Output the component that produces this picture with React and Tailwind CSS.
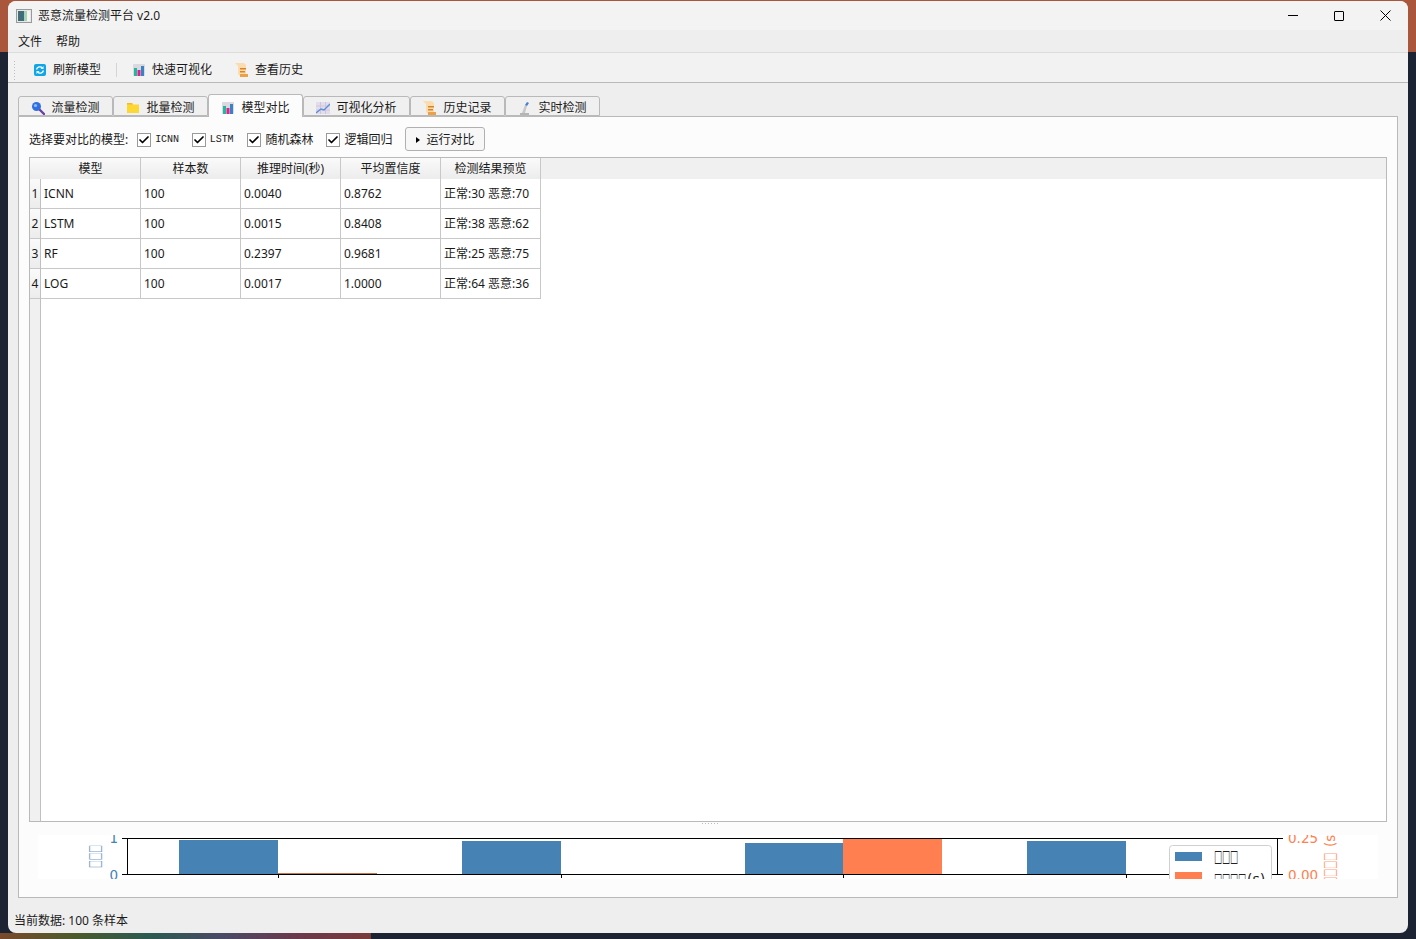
import { Check } from 'lucide-react'

const uiFont = "font-['Noto_Sans','Noto_Sans_CJK_SC',sans-serif]"

function RefreshIcon() {
  return (
    <svg width="14" height="14" viewBox="0 0 14 14" className="shrink-0">
      <rect x="1" y="1" width="12" height="12" rx="2" fill="#0ea5e9" />
      <path d="M3.5 6.5a3.5 3.5 0 0 1 6-1.5M10.5 7.5a3.5 3.5 0 0 1-6 1.5" fill="none" stroke="#fff" strokeWidth="1.3" />
      <path d="M10.5 3v3h-3zM3.5 11V8h3z" fill="#fff" />
    </svg>
  )
}

function ChartIcon() {
  return (
    <svg width="14" height="14" viewBox="0 0 14 14" className="shrink-0">
      <rect x="1" y="1" width="12" height="12" rx="1" fill="#dcd8e0" />
      <rect x="2" y="5" width="3" height="8" fill="#22b8a0" />
      <rect x="5.5" y="7" width="3" height="6" fill="#e0218a" />
      <rect x="9" y="3" width="3" height="10" fill="#3b82c4" />
    </svg>
  )
}

function ScrollIcon() {
  return (
    <svg width="14" height="14" viewBox="0 0 14 14" className="shrink-0">
      <path d="M0 0h9l2 2v11H5L3 11V3z" fill="#fcdcae" />
      <rect x="5" y="5" width="6" height="1.5" fill="#d98324" />
      <rect x="5" y="8" width="5" height="1.5" fill="#d98324" />
      <rect x="5" y="11" width="8" height="3" fill="#eda04a" />
    </svg>
  )
}

function SearchIcon() {
  return (
    <svg width="14" height="14" viewBox="0 0 14 14" className="shrink-0">
      <path d="M8 8l5 5" stroke="#6d3fa0" strokeWidth="2.4" strokeLinecap="round" />
      <circle cx="5.5" cy="5.5" r="4.5" fill="#2f6fe0" />
      <circle cx="4.5" cy="4.5" r="1.6" fill="#8fc0f5" />
    </svg>
  )
}

function FolderIcon() {
  return (
    <svg width="14" height="14" viewBox="0 0 14 14" className="shrink-0">
      <path d="M1 2h5l1 1.5h6V12H1z" fill="#fdd835" />
      <path d="M1 2h5l1 1.5H1z" fill="#f5b921" />
    </svg>
  )
}

function TrendIcon() {
  return (
    <svg width="14" height="14" viewBox="0 0 14 14" className="shrink-0">
      <rect x="0" y="1" width="14" height="12" fill="#e3dcec" />
      <path d="M0 5h14M0 9h14M4.5 1v12M9.5 1v12" stroke="#cfc6dc" strokeWidth="1" />
      <path d="M0 12l5-4 3 1 6-6" fill="none" stroke="#5b8fd8" strokeWidth="1.4" />
    </svg>
  )
}

function ProbeIcon() {
  return (
    <svg width="14" height="14" viewBox="0 0 14 14" className="shrink-0">
      <path d="M2 14h9v-2H2z" fill="#b5b5b5" />
      <path d="M4 12l3-8 2 1-2 7z" fill="#c8c8c8" />
      <path d="M7 4l2-3 2 1-2 3z" fill="#4a7fd0" />
    </svg>
  )
}

function ModelCheck({ label, mono, className = '' }) {
  return (
    <div className={`flex items-center gap-[4px] ${className}`}>
      <span className="flex h-[14px] w-[14px] items-center justify-center border border-[#9a9a9a] bg-white">
        <Check size={12} strokeWidth={3.5} className="text-black" />
      </span>
      <span className={mono ? "font-['Liberation_Mono',monospace] text-[10px] tracking-[-0.1px]" : ''}>{label}</span>
    </div>
  )
}

const tabs = [
  { label: '流量检测', icon: <SearchIcon />, w: 'w-[95px]' },
  { label: '批量检测', icon: <FolderIcon />, w: 'w-[95px]' },
  { label: '模型对比', icon: <ChartIcon />, w: 'w-[95px]', active: true },
  { label: '可视化分析', icon: <TrendIcon />, w: 'w-[107px]' },
  { label: '历史记录', icon: <ScrollIcon />, w: 'w-[95px]' },
  { label: '实时检测', icon: <ProbeIcon />, w: 'w-[95px]' },
]

const columns = [
  { label: '模型', w: 'w-[111px] pl-[11px]' },
  { label: '样本数', w: 'w-[100px]' },
  { label: '推理时间(秒)', w: 'w-[100px]' },
  { label: '平均置信度', w: 'w-[100px]' },
  { label: '检测结果预览', w: 'w-[100px]' },
]

const rows = [
  ['ICNN', '100', '0.0040', '0.8762', '正常:30 恶意:70'],
  ['LSTM', '100', '0.0015', '0.8408', '正常:38 恶意:62'],
  ['RF', '100', '0.2397', '0.9681', '正常:25 恶意:75'],
  ['LOG', '100', '0.0017', '1.0000', '正常:64 恶意:36'],
]

function CompareChart() {
  return (
    <svg width="1340" height="44" viewBox="38 835 1340 44" className="block bg-white">
      <rect x="179" y="840" width="99" height="34" fill="#4682b4" />
      <rect x="278" y="873" width="99" height="1" fill="#c8734f" />
      <rect x="462" y="841" width="99" height="33" fill="#4682b4" />
      <rect x="745" y="843" width="98" height="31" fill="#4682b4" />
      <rect x="843" y="839" width="99" height="35" fill="#ff7f50" />
      <rect x="1027" y="841" width="99" height="33" fill="#4682b4" />

      <rect x="127.5" y="838.5" width="1150" height="36" fill="none" stroke="#000" />
      <path d="M278.5 875v3M561.5 875v3M843.5 875v3M1126.5 875v3M122 838.5h5M122 874.5h5M1278 838.5h5M1278 874.5h5" stroke="#000" />

      <g fontFamily="DejaVu Sans, sans-serif" fontSize="13.5">
        <text x="118" y="843" textAnchor="end" fill="#4682b4">1</text>
        <text x="118" y="880" textAnchor="end" fill="#4682b4">0</text>
        <text x="1288" y="843" fill="#ff7f50">0.25</text>
        <text x="1288" y="880" fill="#ff7f50">0.00</text>
        <text transform="translate(1335 847) rotate(-90)" fill="#ff7f50">(s)</text>
      </g>
      <g fontFamily="DejaVu Sans, sans-serif" fontSize="17">
        <text transform="translate(100 868) rotate(-90)" textLength="23" lengthAdjust="spacingAndGlyphs" fill="#4682b4" opacity="0.75">□□□</text>
        <text transform="translate(1335 885) rotate(-90)" textLength="32" lengthAdjust="spacingAndGlyphs" fill="#ff7f50" opacity="0.75">□□□□</text>
      </g>

      <rect x="1169.5" y="845.5" width="102" height="50" rx="3" fill="#fff" stroke="#d0d0d0" />
      <rect x="1175" y="852" width="27" height="9" fill="#4682b4" />
      <rect x="1175" y="872" width="27" height="9" fill="#ff7f50" />
      <g fontFamily="DejaVu Sans, sans-serif" fill="#222">
        <text x="1214" y="862" fontSize="17" textLength="24" lengthAdjust="spacingAndGlyphs">□□□</text>
        <text x="1214" y="885" fontSize="17" textLength="32" lengthAdjust="spacingAndGlyphs">□□□□</text>
        <text x="1247" y="884" fontSize="14">(s)</text>
      </g>
    </svg>
  )
}

export default function App() {
  return (
    <div className={`relative h-[939px] w-[1416px] overflow-hidden bg-[#1c2333] pl-2 pt-px text-[12px] leading-none text-[#1a1a1a] ${uiFont}`}>
      {/* desktop wallpaper peeking out round the window */}
      <div className="absolute left-0 top-0 h-[52px] w-full bg-[#a9563c]" />
      <div className="absolute bottom-0 left-0 h-[6px] w-[371px] bg-[linear-gradient(90deg,#7a4a2c,#4b5a2c,#2c5a50,#4a4a66,#6a3a4c,#7a3a3a)]" />

      <div className="relative flex h-[932px] w-[1400px] flex-col overflow-hidden rounded-lg bg-[#eeeeee]">
        <div className="flex h-[29px] items-center justify-between bg-[#f3f3f3] pl-[8px]">
          <div className="flex items-center gap-[6px]">
            <svg width="16" height="14" viewBox="0 0 16 14">
              <rect x="0.5" y="0.5" width="15" height="13" fill="#e8e8e8" stroke="#9a9a9a" />
              <rect x="2" y="2" width="6" height="10" fill="#3f6f78" />
              <rect x="8" y="2" width="3" height="10" fill="#a8d4b8" />
              <rect x="11" y="2" width="3" height="10" fill="#f5f5f5" />
            </svg>
            <span>恶意流量检测平台 v2.0</span>
          </div>
          <div className="flex items-center">
            <div className="flex h-[29px] w-[46px] items-center justify-center">
              <div className="h-px w-[10px] bg-black" />
            </div>
            <div className="flex h-[29px] w-[46px] items-center justify-center">
              <div className="h-[10px] w-[10px] rounded-[1px] border border-black" />
            </div>
            <div className="flex h-[29px] w-[46px] items-center justify-center">
              <svg width="11" height="11" viewBox="0 0 11 11">
                <path d="M.5.5l10 10M10.5.5l-10 10" stroke="#000" strokeWidth="1" />
              </svg>
            </div>
          </div>
        </div>

        <div className="flex h-[23px] items-center gap-[14px] border-b border-[#dcdcdc] bg-[#eeeeee] pl-[10px] pt-[2px]">
          <span>文件</span>
          <span>帮助</span>
        </div>

        <div className="flex h-[30px] items-center border-b border-[#b8b8b8] bg-[#f2f2f2] pl-[5px] pt-[5px]">
          <div className="mr-[17px] h-[20px] w-[3px] bg-[radial-gradient(#bdbdbd_0.6px,transparent_0.8px)] bg-[length:3px_3px]" />
          <div className="flex items-center gap-[6px]">
            <RefreshIcon />
            <span>刷新模型</span>
          </div>
          <div className="mx-[15px] h-[14px] w-px bg-[#d5d5d5]" />
          <div className="flex items-center gap-[6px]">
            <ChartIcon />
            <span>快速可视化</span>
          </div>
          <div className="ml-[23px] flex items-center gap-[6px]">
            <ScrollIcon />
            <span>查看历史</span>
          </div>
        </div>

        <div className="flex flex-1 flex-col px-[10px] pt-[11px]">
          <div className="relative z-10 flex h-[22px] items-end">
            {tabs.map((tab) => (
              <div
                key={tab.label}
                className={`flex items-center justify-center gap-[6px] rounded-t-[3px] border border-[#b9b9b9] ${tab.w} ${
                  tab.active
                    ? '-mb-px h-[23px] border-b-0 bg-[#fcfcfc] pt-[3px]'
                    : 'h-[20px] bg-[#f0f0f0] pt-[4px]'
                }`}
              >
                {tab.icon}
                <span>{tab.label}</span>
              </div>
            ))}
          </div>

          <div className="flex h-[782px] flex-col border border-[#b9b9b9] bg-[#fcfcfc] px-[10px] pt-[10px]">
            <div className="flex h-[24px] items-center gap-[13px]">
              <span className="-mr-[4px] pt-px">选择要对比的模型:</span>
              <ModelCheck label="ICNN" mono className="pt-px" />
              <ModelCheck label="LSTM" mono className="mr-px pt-px" />
              <ModelCheck label="随机森林" className="pt-px" />
              <ModelCheck label="逻辑回归" className="pt-px" />
              <div className="flex h-[24px] w-[80px] items-center justify-center gap-[6px] rounded-[3px] border border-[#b0b0b0] bg-[#f7f7f7] pt-px">
                <span className="h-0 w-0 border-y-[3px] border-l-[4px] border-y-transparent border-l-black" />
                <span>运行对比</span>
              </div>
            </div>

            <div className="mt-[6px] flex h-[665px] flex-col border border-[#b9b9b9] bg-white">
              <div className="flex h-[21px] shrink-0 bg-[#f0f0f0]">
                {columns.map((col) => (
                  <div
                    key={col.label}
                    className={`flex items-center justify-center border-r border-[#c8c8c8] bg-[linear-gradient(#fafafa,#ececec)] ${col.w}`}
                  >
                    {col.label}
                  </div>
                ))}
              </div>
              <div className="flex flex-1">
                <div className="flex w-[10px] flex-col bg-[#f0f0f0]">
                  {rows.map((row, i) => (
                    <div key={row[0]} className="flex h-[30px] items-center justify-center border-b border-[#c8c8c8] bg-[linear-gradient(#fafafa,#ececec)]">
                      {i + 1}
                    </div>
                  ))}
                </div>
                <div className="flex flex-col border-l border-[#c0c0c0]">
                  {rows.map((row) => (
                    <div key={row[0]} className="flex h-[30px] border-b border-[#c8c8c8]">
                      {row.map((cell, c) => (
                        <div key={c} className="flex w-[100px] items-center border-r border-[#c8c8c8] pl-[3px]">
                          {cell}
                        </div>
                      ))}
                    </div>
                  ))}
                </div>
              </div>
            </div>

            <div className="flex h-[13px] items-start justify-center pl-[4px] pt-px">
              <div className="h-px w-[16px] bg-[repeating-linear-gradient(90deg,#bbbbbb_0,#bbbbbb_1px,transparent_1px,transparent_3px)]" />
            </div>

            <div className="pl-[9px]">
              <CompareChart />
            </div>
          </div>

          <div className="flex flex-1 items-end pb-[6px]">
            <span className="-ml-[4px]">当前数据: 100 条样本</span>
          </div>
        </div>
      </div>
    </div>
  )
}
